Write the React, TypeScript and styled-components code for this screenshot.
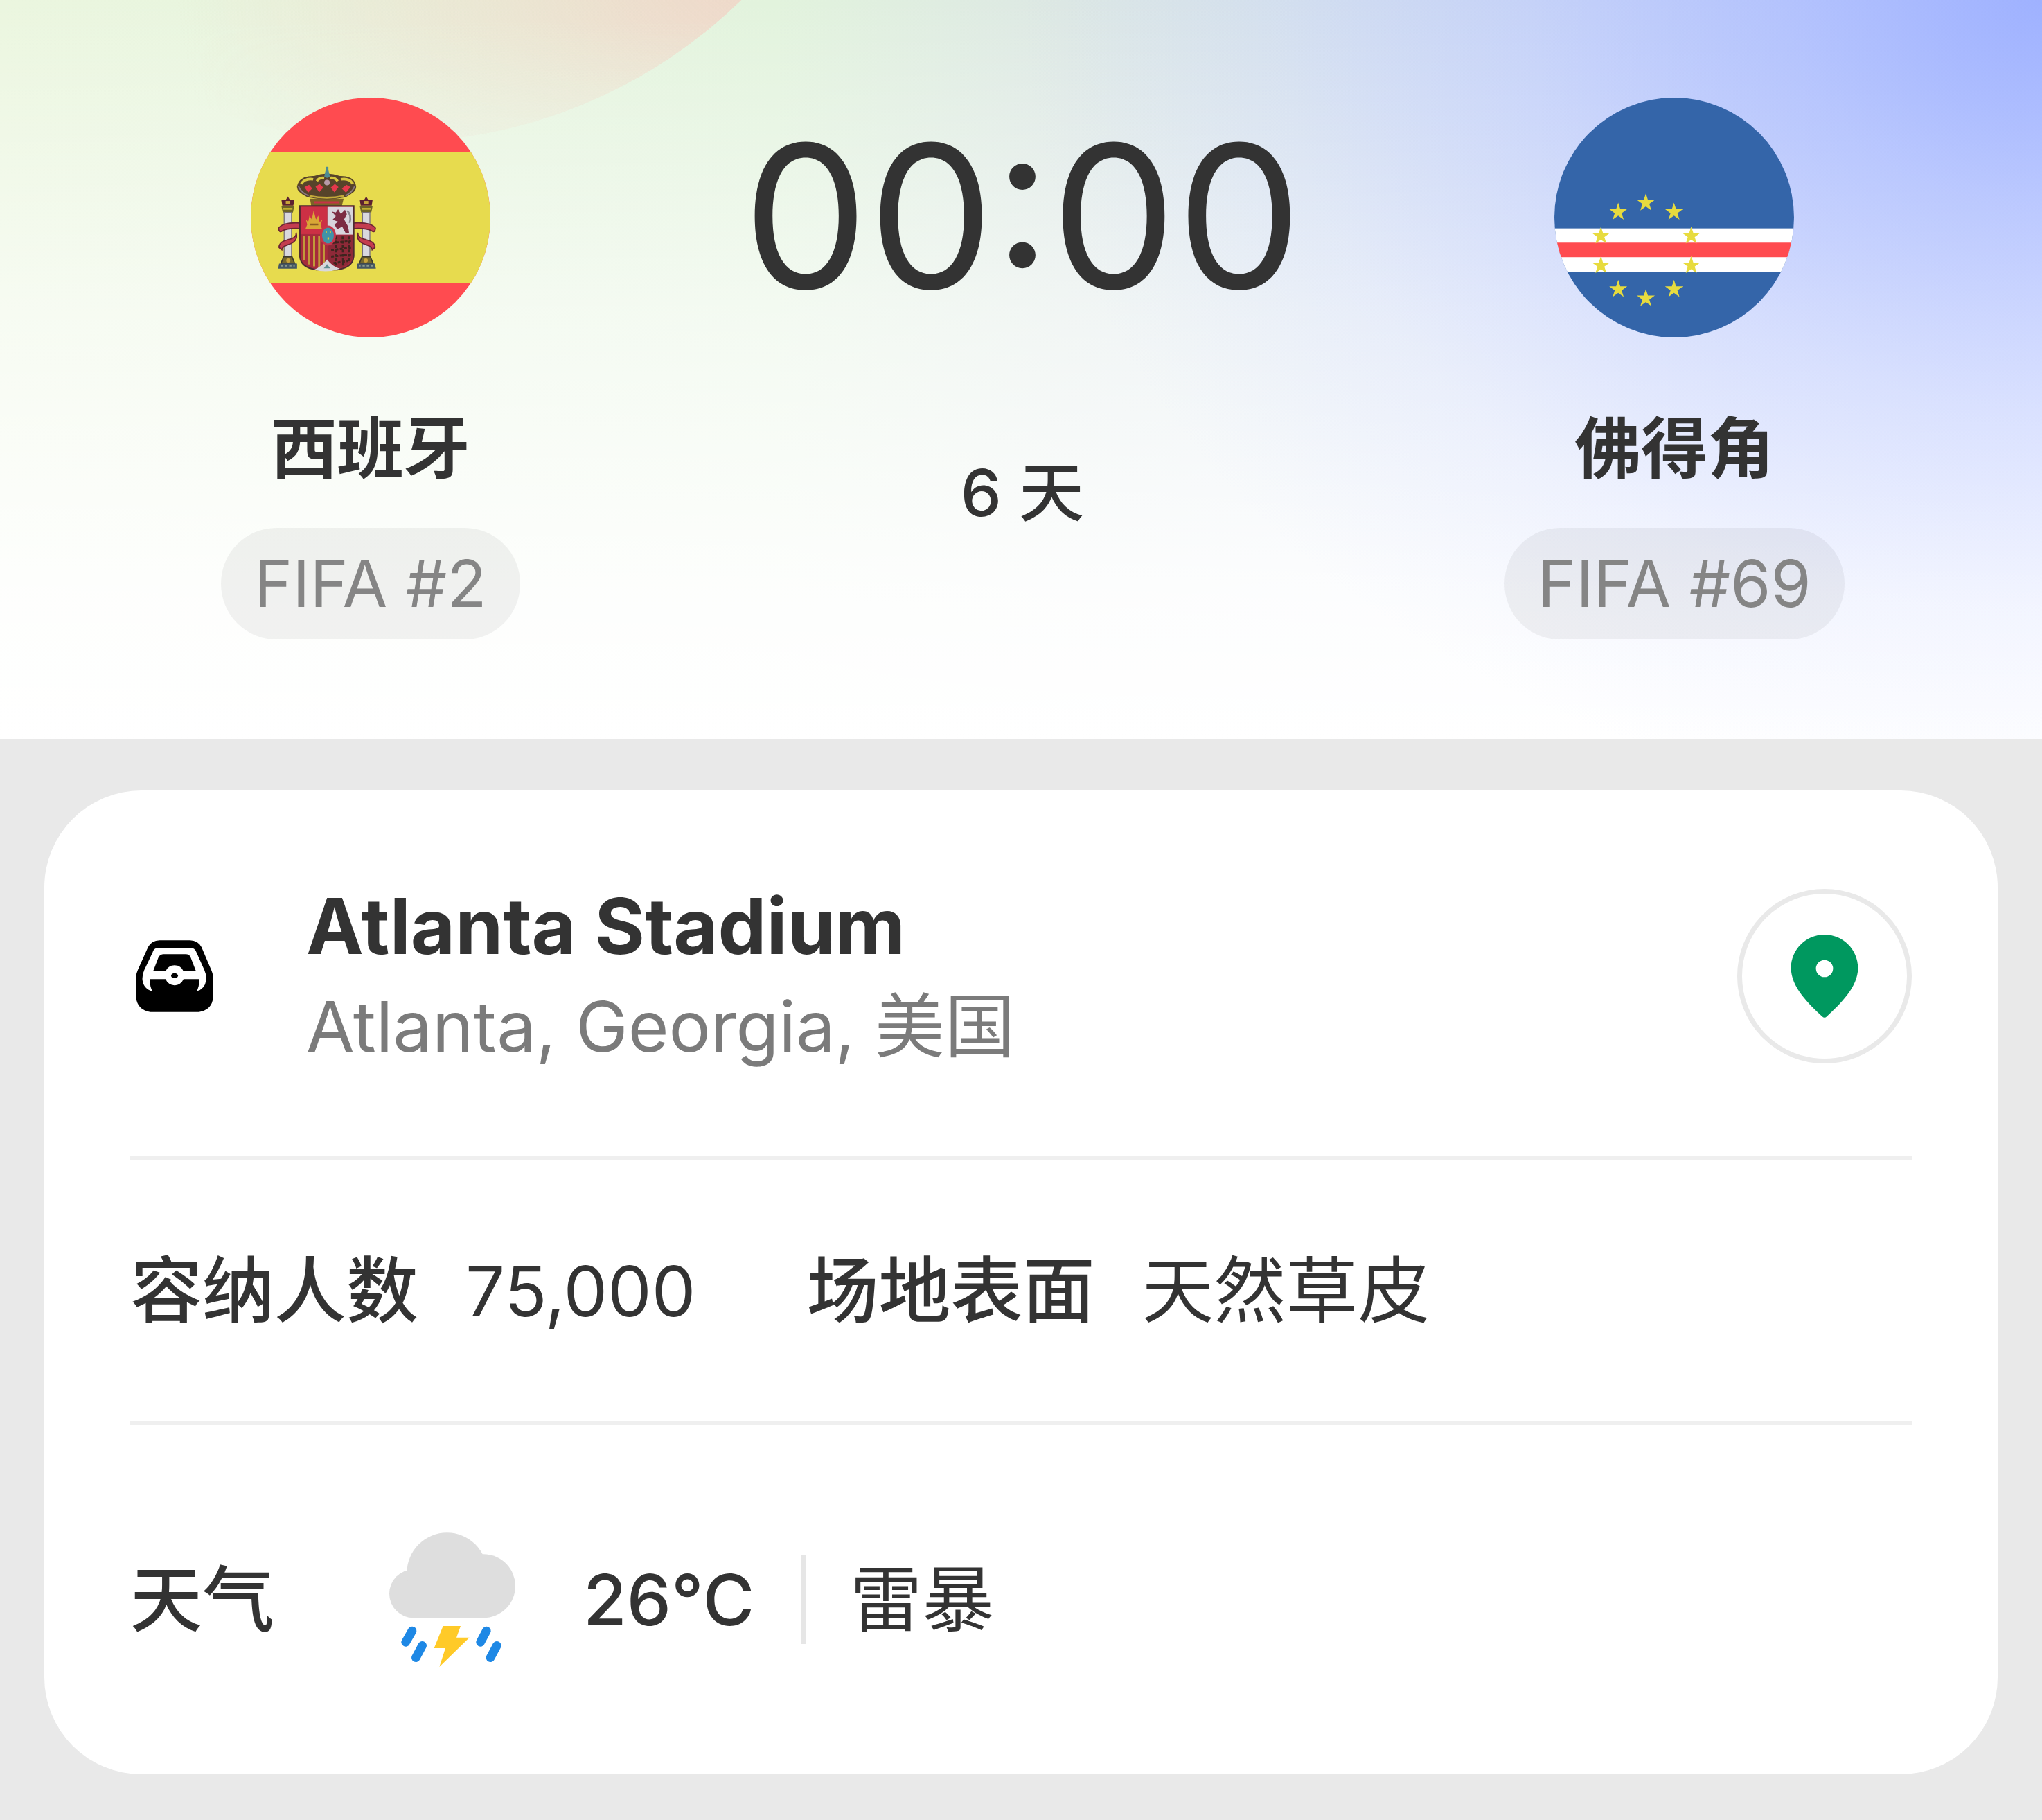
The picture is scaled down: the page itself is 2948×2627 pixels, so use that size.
import React from 'react'
import styled, { createGlobalStyle } from 'styled-components'

const GlobalStyle = createGlobalStyle`
    * {
        box-sizing: border-box;
    }

    body {
        margin: 0;
        background: #e9e9e9;
        color: #333;
        font-family: Inter, "Noto Sans CJK SC", sans-serif;
    }
`

const Hero = styled.header`
    position: relative;
    overflow: hidden;
    display: flex;
    align-items: flex-start;
    padding: 141px 60px 144px 64px;
    background:
        radial-gradient(ellipse 50% 110% at 100% 0%, rgba(150, 170, 255, .84) 0%, rgba(150, 170, 255, .5) 25%, rgba(150, 170, 255, .26) 50%, rgba(150, 170, 255, .09) 75%, rgba(150, 170, 255, 0) 100%),
        linear-gradient(to bottom, rgba(255, 255, 255, 0) 0%, rgba(255, 255, 255, .6) 42%, rgba(255, 255, 255, .93) 80%, #fff 100%),
        linear-gradient(to right, #ebf6df 0%, #e2f3dd 38%, #dde8e4 52%, #d9e4ee 64%, #d5dff8 78%, #cdd8ff 100%);
`

const Glow = styled.div`
    position: absolute;
    top: -1246px;
    left: -162px;
    width: 1452px;
    height: 1452px;
    border-radius: 50%;
    background: radial-gradient(circle 860px at 1270px 1150px, rgba(255, 180, 176, .48) 0%, rgba(250, 196, 184, .32) 40%, rgba(250, 205, 185, 0) 100%);
    mask-image: linear-gradient(to bottom, #000 88%, rgba(0, 0, 0, .4) 99%);
`

const Team = styled.section`
    position: relative;
    flex: 1;
    display: flex;
    flex-direction: column;
    align-items: center;
`

const Flag = styled.svg`
    width: 346px;
    height: 346px;
    border-radius: 50%;
`

const TeamName = styled.h2`
    margin: 104px 0 59px;
    font-size: 96px;
    line-height: 112px;
    font-weight: 600;
`

const Rank = styled.span`
    padding: 0 48px;
    border-radius: 80px;
    background: rgba(0, 0, 0, .05);
    color: #858585;
    font-size: 94px;
    line-height: 161px;
`

const Kickoff = styled.section`
    position: relative;
    flex: 1;
    display: flex;
    flex-direction: column;
    align-items: center;
    gap: 172px;
`

const Time = styled.time`
    font-size: 287px;
    line-height: 342px;
`

const Days = styled.span`
    font-size: 94px;
    line-height: 112px;
    font-weight: 500;
`

const Card = styled.main`
    margin: 74px 64px 68px;
    padding: 0 124px;
    border-radius: 140px;
    background: #fff;
`

const Row = styled.section<{ $pad: string }>`
    display: flex;
    align-items: center;
    padding: ${p => p.$pad};

    & + & {
        border-top: 6px solid #efefef;
    }
`

const StadiumSlot = styled.div`
    display: flex;
    justify-content: center;
    width: 128px;
    margin-right: 126px;
`

const Place = styled.div`
    flex: 1;
`

const Title = styled.h1`
    margin: 0;
    font-size: 111px;
    line-height: 144px;
    font-weight: 700;
`

const Address = styled.p`
    margin: 0;
    color: #7b7b7b;
    font-size: 101px;
    line-height: 144px;
`

const MapButton = styled.button`
    display: flex;
    align-items: center;
    justify-content: center;
    width: 252px;
    height: 252px;
    padding: 0;
    border: 7px solid #e9e9e9;
    border-radius: 50%;
    background: #fff;
    cursor: pointer;
`

const Facts = styled.dl`
    display: flex;
    gap: 160px;
    margin: 0;
    font-size: 104px;
    line-height: 128px;
`

const Fact = styled.div`
    display: flex;
    gap: 68px;
`

const Term = styled.dt`
    font-weight: 500;
`

const Value = styled.dd<{ $numeric?: boolean }>`
    margin: 0;
    font-size: ${p => p.$numeric ? '101px' : '104px'};
`

const Label = styled.h3`
    margin: 0 166px 0 0;
    font-size: 104px;
    line-height: 128px;
    font-weight: 500;
`

const Temperature = styled.span`
    margin-left: 98px;
    font-size: 102px;
    line-height: 128px;
    font-weight: 500;
`

const Condition = styled.span`
    margin-left: 68px;
    padding-left: 64px;
    border-left: 6px solid #e6e6e6;
    font-size: 104px;
    line-height: 128px;
`

const STAR = 'M0 -40 L9 -12 L39 -12 L15 6 L24 34 L0 17 L-24 34 L-15 6 L-39 -12 L-9 -12Z'

const stars = [
    [469, 517], [349, 557], [591, 557], [274, 661], [666, 661],
    [274, 789], [666, 789], [349, 892], [591, 892], [469, 932],
]

const Pillar: React.FC<{ x: number, flip?: boolean }> = ({ x, flip }) => (
    <g transform={`translate(${x} 0) scale(${flip ? -1 : 1} 1)`}>
        <path d="M0 490 L8 504 L28 504 L24 530 L-24 530 L-28 504 L-8 504Z" fill="#5c2230" />
        <rect x="-9" y="510" width="18" height="12" fill="#c9a43a" />
        <path d="M-28 532 H28 L22 560 H-22Z" fill="#6d6427" />
        <rect x="-20" y="540" width="40" height="8" fill="#c3b22f" />
        <rect x="-16" y="560" width="32" height="192" fill="#d9d8de" stroke="#77707a" strokeWidth="4" />
        <path d="M60 606 Q-20 600 -40 628 Q-38 650 -24 640 Q0 626 60 630Z" fill="#c43c4f" stroke="#6b2533" strokeWidth="5" />
        <path d="M36 648 Q40 670 0 678 Q-40 688 -38 712 L-26 722 Q-24 706 6 698 Q46 684 36 648Z" fill="#c43c4f" stroke="#6b2533" strokeWidth="5" />
        <path d="M-18 752 H18 L30 782 H-30Z" fill="#75682c" stroke="#3c3a2e" strokeWidth="5" />
        <circle cx="2" cy="768" r="9" fill="#c9a43a" />
        <path d="M-38 782 H40 V804 H-42Z" fill="#465764" />
        <path d="M-30 792 H30" stroke="#8c9a8a" strokeWidth="5" strokeDasharray="10 8" />
    </g>
)

const SpainFlag: React.FC = () => (
    <Flag viewBox="65 62 1040 1040" role="img" aria-label="西班牙">
        <rect x="65" y="62" width="1040" height="1040" fill="#ff4b50" />
        <rect x="65" y="298" width="1040" height="569" fill="#e7db4e" />
        <Pillar x={226} />
        <Pillar x={566} flip />
        <path d="M322 500 H468 L460 534 H328Z" fill="#7b6226" />
        <path d="M340 516 H450" stroke="#c53346" strokeWidth="9" />
        <path d="M312 494 Q262 470 266 446 Q276 400 340 402 Q396 380 452 402 Q516 400 522 446 Q526 470 476 494 Q396 510 312 494Z" fill="#57432a" />
        <path d="M284 436 Q300 410 336 416 M352 424 Q360 408 384 410 M410 410 Q432 408 442 424 M456 416 Q494 410 508 436" stroke="#d8c83f" strokeWidth="11" fill="none" />
        <path d="M298 450 L318 440 L332 456 L314 474Z M346 448 L364 436 L380 452 L362 472Z M412 452 L430 436 L446 450 L428 472Z M460 456 L480 440 L498 450 L478 474Z" fill="#e5384c" />
        <path d="M272 446 Q280 470 316 488 M516 446 Q508 470 476 488" stroke="#8b7b83" strokeWidth="6" fill="none" />
        <path d="M320 488 Q396 504 468 488" stroke="#c3a93a" strokeWidth="8" fill="none" />
        <path d="M390 362 H402 V376 L409 404 Q396 416 384 404 L390 376Z" fill="#4d8b93" />
        <circle cx="396" cy="430" r="12" fill="#b79aa8" />
        <path d="M278 532 H512 V750 Q508 800 440 808 H350 Q282 800 278 750Z" fill="#a82c3d" stroke="#4c2b31" strokeWidth="6" />
        <rect x="284" y="536" width="112" height="118" fill="#cc3045" />
        <path d="M304 590 L314 602 L320 574 L330 590 L338 552 L348 590 L358 574 L364 602 L376 590 L368 612 L374 632 H302 L310 612Z" fill="#d9a736" />
        <path d="M322 612 H358" stroke="#8d5d22" strokeWidth="7" />
        <rect x="398" y="536" width="110" height="120" fill="#d8d5dc" />
        <path d="M416 556 L434 560 L444 546 L456 566 L474 548 L482 568 L470 590 L488 622 L492 650 L476 648 L462 622 L440 632 L428 612 L444 600 L420 592 L434 576Z" fill="#7c2c42" />
        <path d="M484 552 Q504 572 494 606" stroke="#8a8790" strokeWidth="8" fill="none" />
        <path d="M284 658 H394 V800 H352 Q288 794 284 750Z" fill="#a62b3b" />
        <path d="M297 662 V768 M318 662 V786 M340 662 V794 M362 662 V796 M382 662 V796" stroke="#c1993a" strokeWidth="9" />
        <path d="M398 658 H508 V750 Q502 790 440 802 H398Z" fill="#8e2938" />
        <path d="M416 692 L500 684 M414 724 L500 712 M414 752 L500 742 M424 780 L488 770 M434 664 L436 796 M464 664 L466 790 M492 664 L490 776" stroke="#3f241f" strokeWidth="9" strokeDasharray="12 7" />
        <path d="M340 808 Q372 796 396 764 Q420 796 452 804 Q396 824 340 808Z" fill="#d8d8dc" />
        <path d="M382 802 L396 784 L410 802Z" fill="#5f8f93" />
        <ellipse cx="400" cy="660" rx="30" ry="39" fill="#3f93a8" stroke="#c5364b" strokeWidth="9" />
        <path d="M390 646 h5 M408 646 h5 M398 672 h7" stroke="#d8c83f" strokeWidth="9" />
    </Flag>
)

const CapeVerdeFlag: React.FC = () => (
    <Flag viewBox="72 62 1040 1040" role="img" aria-label="佛得角">
        <rect x="72" y="62" width="1040" height="1040" fill="#3465a9" />
        <rect x="72" y="629" width="1040" height="189" fill="#fff" />
        <rect x="72" y="691" width="1040" height="63" fill="#ff4b50" />
        {stars.map(([x, y]) => (
            <path key={`${x}-${y}`} d={STAR} transform={`translate(${x} ${y})`} fill="#e7db3e" />
        ))}
    </Flag>
)

const StadiumIcon: React.FC = () => (
    <svg width="112" height="104" viewBox="77 77 336 312" aria-hidden="true">
        <path d="M180 78 H312 Q346 78 362 108 L404 206 Q412 222 412 240 V324 Q408 380 350 388 H140 Q84 380 78 324 V240 Q78 222 86 206 L130 108 Q146 78 180 78Z" />
        <path d="M150 298 Q112 290 106 250 Q104 228 114 206 L150 130 Q156 110 174 110 H316 Q332 110 340 130 L374 206 Q384 228 382 250 Q376 290 340 298 Q352 284 352 246 H284 A42 42 0 0 1 206 246 H138 Q138 284 150 298Z" fill="#fff" />
        <path d="M152 212 L176 150 Q184 138 198 138 H294 Q308 138 314 150 L338 212 H284 A42 42 0 0 0 206 212Z" />
        <ellipse cx="245" cy="231" rx="15" ry="11" />
    </svg>
)

const PinIcon: React.FC = () => (
    <svg width="98" height="120" viewBox="286 265 290 360" aria-hidden="true">
        <path
            d="M431 265 C511 265 576 330 576 410 C576 494 498 566 441 620 Q431 629 421 620 C364 566 286 494 286 410 C286 330 351 265 431 265Z M431 375 a37 37 0 1 0 0 74 a37 37 0 1 0 0 -74Z"
            fill="#00985f"
            fillRule="evenodd"
        />
    </svg>
)

const StormIcon: React.FC = () => (
    <svg width="182" height="194" viewBox="95 95 546 582" role="img" aria-label="雷暴">
        <circle cx="200" cy="360" r="105" fill="#dedede" />
        <circle cx="345" cy="270" r="174" fill="#dedede" />
        <circle cx="503" cy="327" r="138" fill="#dedede" />
        <rect x="200" y="330" width="303" height="135" fill="#dedede" />
        <path d="M194 521 L166 570 M238 585 L210 637 M516 521 L490 570 M561 585 L533 637" stroke="#1e88e5" strokeWidth="38" strokeLinecap="round" />
        <path d="M328 500 H404 L386 550 H442 L312 677 L338 596 H289Z" fill="#ffca28" />
    </svg>
)

const App: React.FC = () => {
    return (
        <>
            <GlobalStyle />
            <Hero>
                <Glow />
                <Team>
                    <SpainFlag />
                    <TeamName>西班牙</TeamName>
                    <Rank>FIFA #2</Rank>
                </Team>
                <Kickoff>
                    <Time>00:00</Time>
                    <Days>6 天</Days>
                </Kickoff>
                <Team>
                    <CapeVerdeFlag />
                    <TeamName>佛得角</TeamName>
                    <Rank>FIFA #69</Rank>
                </Team>
            </Hero>
            <Card>
                <Row $pad="124px 0 116px">
                    <StadiumSlot>
                        <StadiumIcon />
                    </StadiumSlot>
                    <Place>
                        <Title>Atlanta Stadium</Title>
                        <Address>Atlanta, Georgia, 美国</Address>
                    </Place>
                    <MapButton type="button" aria-label="Atlanta Stadium">
                        <PinIcon />
                    </MapButton>
                </Row>
                <Row $pad="124px 0">
                    <Facts>
                        <Fact>
                            <Term>容纳人数</Term>
                            <Value $numeric>75,000</Value>
                        </Fact>
                        <Fact>
                            <Term>场地表面</Term>
                            <Value>天然草皮</Value>
                        </Fact>
                    </Facts>
                </Row>
                <Row $pad="155px 0">
                    <Label>天气</Label>
                    <StormIcon />
                    <Temperature>26°C</Temperature>
                    <Condition>雷暴</Condition>
                </Row>
            </Card>
        </>
    )
}

export default App
